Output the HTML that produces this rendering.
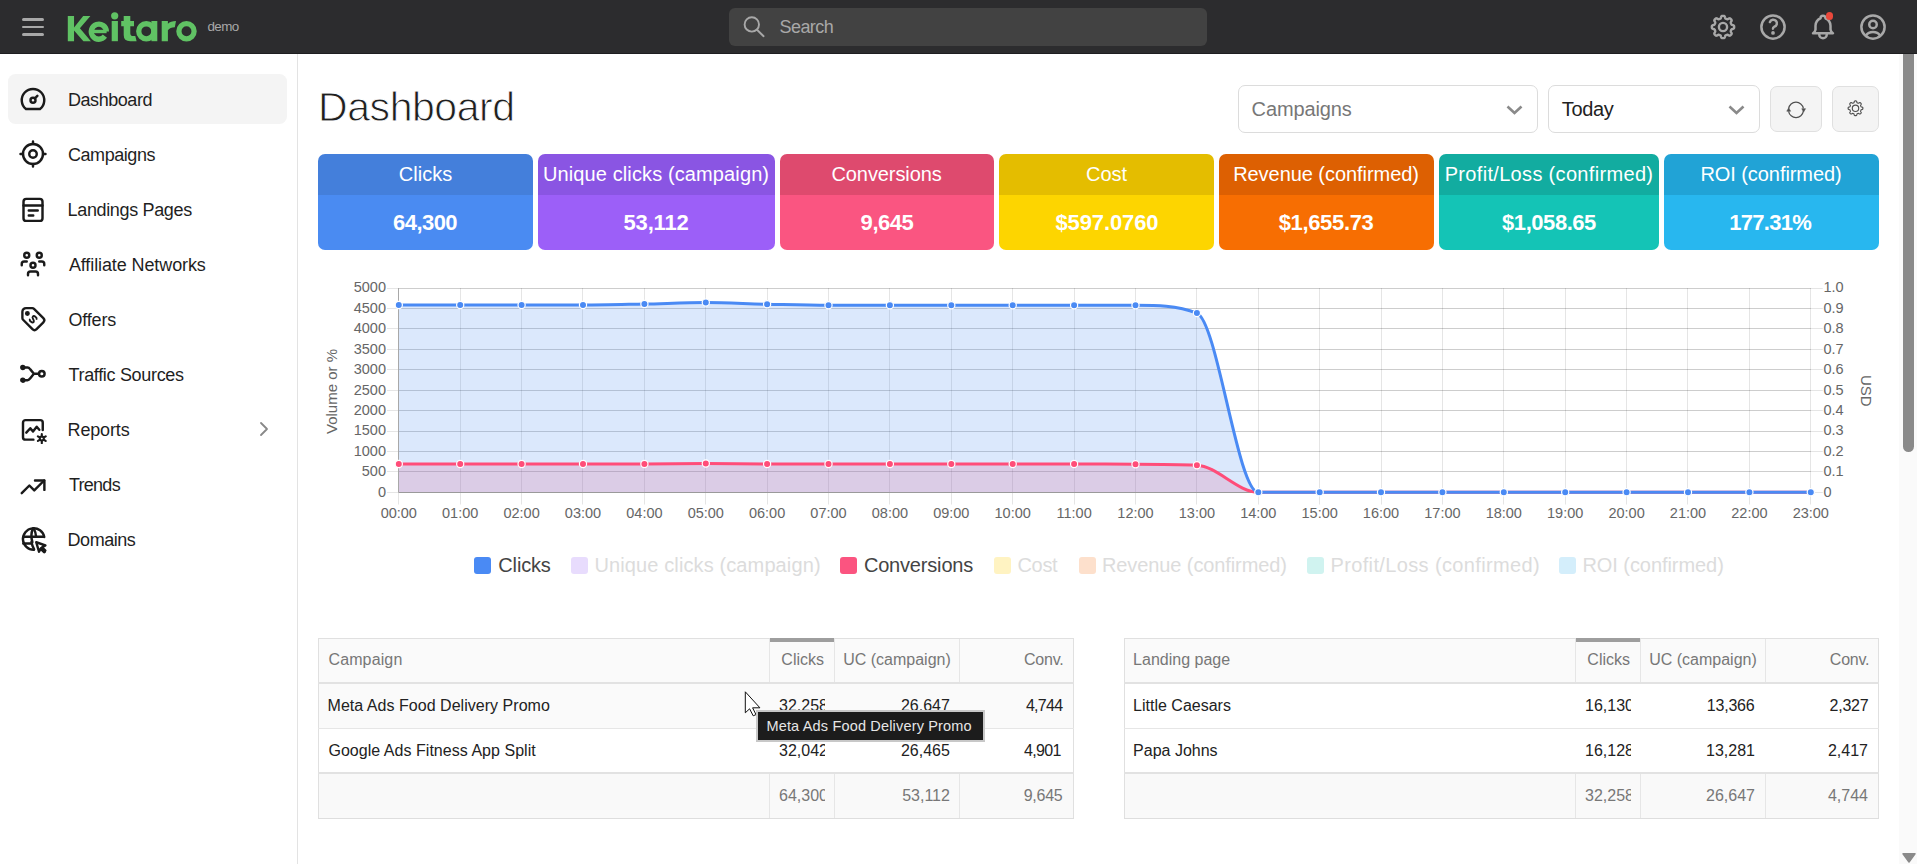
<!DOCTYPE html>
<html><head><meta charset="utf-8"><title>Keitaro Dashboard</title>
<style>
*{box-sizing:border-box;margin:0;padding:0}
html,body{width:1917px;height:864px;overflow:hidden;background:#fff;font-family:"Liberation Sans",sans-serif;color:#222}
#top{position:absolute;left:0;top:0;width:1917px;height:54px;background:#2c2c2e;border-bottom:1px solid #1e1e20;z-index:5}
.hb{position:absolute;left:22px;width:22px;height:2.6px;background:#a8a8a8;border-radius:2px}
#side{position:absolute;left:0;top:54px;width:298px;height:810px;border-right:1px solid #e3e3e3;background:#fff}
.mi{position:absolute;left:18px}
.mt{position:absolute;left:68px;font-size:18px;line-height:24px;color:#1f1f1f;white-space:nowrap}
.card{position:absolute;top:154px;height:96px;border-radius:7px;overflow:hidden;color:#fff;text-align:center}
.ct{height:41px;font-size:20px;line-height:41px;white-space:nowrap}
.ct span,.cv span{display:inline-block}
.cv{height:55px;font-size:22px;font-weight:bold;line-height:56px;white-space:nowrap}
.sel{position:absolute;top:85px;height:48px;border:1px solid #dcdcdc;border-radius:7px;background:#fff;font-size:20px;line-height:46px;padding-left:13px}
.sel span{display:inline-block}
.btn{position:absolute;top:86px;height:46px;border:1px solid #e0e0e0;border-radius:7px;background:#f4f4f4}
#chart text{font-family:"Liberation Sans",sans-serif;font-size:14.5px;fill:#666}
.lb{position:absolute;top:557px;width:17px;height:17px;border-radius:3px}
.lt{position:absolute;top:552px;font-size:20px;line-height:26px;white-space:nowrap}
.tbl{position:absolute;top:638px;height:181px;border:1px solid #e0e0e0;border-bottom:2px solid #dedede}
.tb{position:absolute}
.tx{position:absolute;font-size:16px;line-height:20px;white-space:nowrap}
.tx span{display:inline-block}
.clip{overflow:hidden}
</style></head><body>
<div id="top">
<div class="hb" style="top:18px"></div><div class="hb" style="top:25.5px"></div><div class="hb" style="top:33px"></div>
<svg style="position:absolute;left:0;top:0" width="205" height="54"><g fill="#60c264"><path d="M67.8 16H74.05V27.4L83.2 16H90.4L79.9 28.3L90.9 41.2H83.4L74.05 30.6V41.2H67.8Z"/><rect x="92" y="29.8" width="14.6" height="3.4"/><rect x="111.7" y="21" width="6.2" height="20.2"/><circle cx="114.7" cy="15.8" r="3.6"/><path d="M123.7 16H130.3V21.1H134V26.3H130.3V33.2Q130.3 36.1 133.5 36.1H135.3L136.6 41.2H130.3Q123.7 41.2 123.7 35V26.3H121.2V21.1H123.7Z"/><rect x="151.4" y="21" width="5.9" height="20.2"/><path d="M161.7 21H167.9V23.8Q170.6 21 176 21L174.8 27.3Q170 27.3 167.9 30.2V41.2H161.7Z"/></g><g fill="none" stroke="#60c264" stroke-width="5.3"><path d="M106.4 31.5A7.55 7.55 0 1 0 104.9 36.2"/><circle cx="146.3" cy="31.3" r="7.55"/><circle cx="186.5" cy="31.3" r="7.6"/></g></svg>
<div id="demo" style="position:absolute;left:207px;top:17.5px;font-size:13.4px;line-height:18px;color:#a8a8a8;letter-spacing:-0.600px;transform:translateX(0.45px);">demo</div>
<div style="position:absolute;left:729px;top:8px;width:478px;height:38px;background:#424242;border-radius:6px"></div>
<svg style="position:absolute;left:740px;top:13px" width="28" height="28" viewBox="0 0 28 28" fill="none" stroke="#a8a8a8" stroke-width="1.9" stroke-linecap="round"><circle cx="11.8" cy="11.4" r="7.2"/><path d="M17 16.7l6.6 6.5"/></svg>
<div id="search" style="position:absolute;left:779px;top:14px;font-size:18px;line-height:26px;color:#a8a8a8;letter-spacing:-0.540px;transform:translateX(0.45px);">Search</div>
<svg style="position:absolute;left:1708px;top:12px" width="30" height="30" viewBox="0 0 30 30" fill="none" stroke="#a8a8a8" stroke-width="2.4" stroke-linejoin="round"><path d="M15.00 3.83L15.29 3.84L15.58 3.86L15.87 3.90L16.16 3.99L16.43 4.14L16.67 4.44L16.86 4.94L17.01 5.54L17.15 6.04L17.32 6.36L17.51 6.54L17.71 6.66L17.92 6.76L18.13 6.85L18.34 6.93L18.55 7.02L18.76 7.11L18.98 7.19L19.21 7.24L19.47 7.25L19.81 7.15L20.27 6.89L20.80 6.57L21.28 6.35L21.67 6.31L21.97 6.39L22.23 6.54L22.46 6.71L22.69 6.90L22.90 7.10L23.10 7.31L23.29 7.54L23.46 7.77L23.61 8.03L23.69 8.33L23.65 8.72L23.43 9.20L23.11 9.73L22.85 10.19L22.75 10.53L22.76 10.79L22.81 11.02L22.89 11.24L22.98 11.45L23.07 11.66L23.15 11.87L23.24 12.08L23.34 12.29L23.46 12.49L23.64 12.68L23.96 12.85L24.46 12.99L25.06 13.14L25.56 13.33L25.86 13.57L26.01 13.84L26.10 14.13L26.14 14.42L26.16 14.71L26.17 15.00L26.16 15.29L26.14 15.58L26.10 15.87L26.01 16.16L25.86 16.43L25.56 16.67L25.06 16.86L24.46 17.01L23.96 17.15L23.64 17.32L23.46 17.51L23.34 17.71L23.24 17.92L23.15 18.13L23.07 18.34L22.98 18.55L22.89 18.76L22.81 18.98L22.76 19.21L22.75 19.47L22.85 19.81L23.11 20.27L23.43 20.80L23.65 21.28L23.69 21.67L23.61 21.97L23.46 22.23L23.29 22.46L23.10 22.69L22.90 22.90L22.69 23.10L22.46 23.29L22.23 23.46L21.97 23.61L21.67 23.69L21.28 23.65L20.80 23.43L20.27 23.11L19.81 22.85L19.47 22.75L19.21 22.76L18.98 22.81L18.76 22.89L18.55 22.98L18.34 23.07L18.13 23.15L17.92 23.24L17.71 23.34L17.51 23.46L17.32 23.64L17.15 23.96L17.01 24.46L16.86 25.06L16.67 25.56L16.43 25.86L16.16 26.01L15.87 26.10L15.58 26.14L15.29 26.16L15.00 26.17L14.71 26.16L14.42 26.14L14.13 26.10L13.84 26.01L13.57 25.86L13.33 25.56L13.14 25.06L12.99 24.46L12.85 23.96L12.68 23.64L12.49 23.46L12.29 23.34L12.08 23.24L11.87 23.15L11.66 23.07L11.45 22.98L11.24 22.89L11.02 22.81L10.79 22.76L10.53 22.75L10.19 22.85L9.73 23.11L9.20 23.43L8.72 23.65L8.33 23.69L8.03 23.61L7.77 23.46L7.54 23.29L7.31 23.10L7.10 22.90L6.90 22.69L6.71 22.46L6.54 22.23L6.39 21.97L6.31 21.67L6.35 21.28L6.57 20.80L6.89 20.27L7.15 19.81L7.25 19.47L7.24 19.21L7.19 18.98L7.11 18.76L7.02 18.55L6.93 18.34L6.85 18.13L6.76 17.92L6.66 17.71L6.54 17.51L6.36 17.32L6.04 17.15L5.54 17.01L4.94 16.86L4.44 16.67L4.14 16.43L3.99 16.16L3.90 15.87L3.86 15.58L3.84 15.29L3.83 15.00L3.84 14.71L3.86 14.42L3.90 14.13L3.99 13.84L4.14 13.57L4.44 13.33L4.94 13.14L5.54 12.99L6.04 12.85L6.36 12.68L6.54 12.49L6.66 12.29L6.76 12.08L6.85 11.87L6.93 11.66L7.02 11.45L7.11 11.24L7.19 11.02L7.24 10.79L7.25 10.53L7.15 10.19L6.89 9.73L6.57 9.20L6.35 8.72L6.31 8.33L6.39 8.03L6.54 7.77L6.71 7.54L6.90 7.31L7.10 7.10L7.31 6.90L7.54 6.71L7.77 6.54L8.03 6.39L8.33 6.31L8.72 6.35L9.20 6.57L9.73 6.89L10.19 7.15L10.53 7.25L10.79 7.24L11.02 7.19L11.24 7.11L11.45 7.02L11.66 6.93L11.87 6.85L12.08 6.76L12.29 6.66L12.49 6.54L12.68 6.36L12.85 6.04L12.99 5.54L13.14 4.94L13.33 4.44L13.57 4.14L13.84 3.99L14.13 3.90L14.42 3.86L14.71 3.84Z"/><circle cx="15" cy="15" r="4.1"/></svg>
<svg style="position:absolute;left:1758px;top:12px" width="30" height="30" viewBox="0 0 24 24" fill="none" stroke="#a8a8a8" stroke-width="2" stroke-linecap="round" stroke-linejoin="round"><circle cx="12" cy="12" r="9.3"/><path d="M12 16.7v.01" stroke-width="3"/><path d="M12 13.3a1.5 1.5 0 0 1 .9 -1.45a2.9 2.9 0 1 0 -3.4 -3.8"/></svg>
<svg style="position:absolute;left:1808px;top:12px" width="30" height="30" viewBox="0 0 24 24" fill="none" stroke="#a8a8a8" stroke-width="2" stroke-linecap="round" stroke-linejoin="round"><path d="M10 5a2 2 0 1 1 4 0a7 7 0 0 1 4 6v3a4 4 0 0 0 2 3h-16a4 4 0 0 0 2 -3v-3a7 7 0 0 1 4 -6"/><path d="M9 17v1a3 3 0 0 0 6 0v-1"/></svg>
<div style="position:absolute;left:1825.8px;top:12.3px;width:7.5px;height:7.5px;border-radius:50%;background:#e9483b"></div>
<svg style="position:absolute;left:1858px;top:12px" width="30" height="30" viewBox="0 0 24 24" fill="none" stroke="#a8a8a8" stroke-width="2" stroke-linecap="round" stroke-linejoin="round"><circle cx="12" cy="12" r="9.3"/><circle cx="12" cy="10" r="3"/><path d="M6.5 18.6c1-1.6 2.5-2.6 5.5-2.6s4.5 1 5.5 2.6"/></svg>
</div>
<div id="side">
<div style="position:absolute;left:8px;top:20px;width:279px;height:50px;border-radius:7.5px;background:#f4f4f4"></div>
</div>
<svg class="mi" style="top:84px" width="30" height="30" viewBox="0 0 24 24" fill="none" stroke="#1a1a1a" stroke-width="1.95" stroke-linecap="round" stroke-linejoin="round"><path d="M12 13m-2 0a2 2 0 1 0 4 0a2 2 0 1 0 -4 0"/><path d="M13.45 11.55l2.05 -2.05"/><path d="M6.4 20a9 9 0 1 1 11.2 0z"/></svg>
<div class="mt" id="m_dash" style="top:88px;letter-spacing:-0.450px;">Dashboard</div>
<svg class="mi" style="top:139px" width="30" height="30" viewBox="0 0 24 24" fill="none" stroke="#1a1a1a" stroke-width="1.95" stroke-linecap="round" stroke-linejoin="round"><path d="M12 12m-3 0a3 3 0 1 0 6 0a3 3 0 1 0 -6 0"/><path d="M12 12m-8 0a8 8 0 1 0 16 0a8 8 0 1 0 -16 0"/><path d="M12 2v2M12 20v2M20 12h2M2 12h2"/></svg>
<div class="mt" id="m_camp" style="top:143px;letter-spacing:-0.450px;">Campaigns</div>
<svg class="mi" style="top:194px" width="30" height="30" viewBox="0 0 24 24" fill="none" stroke="#1a1a1a" stroke-width="1.95" stroke-linecap="round" stroke-linejoin="round"><rect x="4.4" y="3.9" width="15.2" height="17.6" rx="2.2"/><path d="M4.4 9.2h15.2M8.6 13.2h7.2M8.6 17.2h3.6"/></svg>
<div class="mt" id="m_land" style="top:198px;letter-spacing:-0.346px;transform:translateX(-0.45px);">Landings Pages</div>
<svg class="mi" style="top:249px" width="30" height="30" viewBox="0 0 24 24" fill="none" stroke="#1a1a1a" stroke-width="1.95" stroke-linecap="round" stroke-linejoin="round"><path d="M10 13a2 2 0 1 0 4 0a2 2 0 0 0 -4 0"/><path d="M8 21v-1a2 2 0 0 1 2 -2h4a2 2 0 0 1 2 2v1"/><path d="M15 5a2 2 0 1 0 4 0a2 2 0 0 0 -4 0"/><path d="M17 10h2a2 2 0 0 1 2 2v1"/><path d="M5 5a2 2 0 1 0 4 0a2 2 0 0 0 -4 0"/><path d="M3 13v-1a2 2 0 0 1 2 -2h2"/></svg>
<div class="mt" id="m_aff" style="top:253px;letter-spacing:-0.106px;transform:translateX(0.90px);">Affiliate Networks</div>
<svg class="mi" style="top:304px" width="30" height="30" viewBox="0 0 24 24" fill="none" stroke="#1a1a1a" stroke-width="1.95" stroke-linecap="round" stroke-linejoin="round"><circle cx="7.5" cy="7.6" r="1" fill="#1a1a1a"/><path d="M3 6v5.172a2 2 0 0 0 .586 1.414l7.71 7.71a2.41 2.41 0 0 0 3.408 0l5.592 -5.592a2.41 2.41 0 0 0 0 -3.408l-7.71 -7.71a2 2 0 0 0 -1.414 -.586h-5.172a3 3 0 0 0 -3 3z" transform="translate(0.6 0.4) scale(0.97)"/><path d="M1.8 -2.2C1.3 -3.1 -1.9 -3.2 -1.9 -1.3C-1.9 0.4 1.9 -0.3 1.9 1.4C1.9 3.2 -1.3 3.2 -1.9 2.3" stroke-width="1.6" transform="translate(12.2 12.2) rotate(45) scale(0.95)"/></svg>
<div class="mt" id="m_offer" style="top:308px;letter-spacing:-0.180px;transform:translateX(0.45px);">Offers</div>
<svg class="mi" style="top:359px" width="30" height="30" viewBox="0 0 24 24" fill="none" stroke="#1a1a1a" stroke-width="1.95" stroke-linecap="round" stroke-linejoin="round"><circle cx="3.84" cy="6.8" r="1.2" fill="#1a1a1a"/><circle cx="3.84" cy="16.96" r="1.2" fill="#1a1a1a"/><path d="M3.84 6.8h3.8c1 0 1.5 .6 2.2 1.5l2.88 3.5l-2.88 3.66c-.7 .9 -1.2 1.5 -2.2 1.5h-3.8M12.72 11.8h4.1"/><circle cx="19.04" cy="11.8" r="2.24"/></svg>
<div class="mt" id="m_traf" style="top:363px;letter-spacing:-0.321px;transform:translateX(0.45px);">Traffic Sources</div>
<svg class="mi" style="top:414px" width="30" height="30" viewBox="0 0 24 24" fill="none" stroke="#1a1a1a" stroke-width="1.95" stroke-linecap="round" stroke-linejoin="round"><path d="M12.3 20.5h-6.3a2 2 0 0 1 -2 -2v-11.6a2 2 0 0 1 2 -2h11.8a2 2 0 0 1 2 2v5.9"/><path d="M6.64 14.88l3.2 -3.52l2.16 2.64l2.96 -3.76l2.08 2.4"/><circle cx="19.04" cy="19.68" r="1.6" stroke-width="1.6"/><path d="M19.04 16.1v1.9M19.04 21.4v1.9M15.94 17.9l1.6 .9M20.54 20.6l1.6 .9M15.94 21.5l1.6 -.9M20.54 18.8l1.6 -.9" stroke-width="1.7"/></svg>
<div class="mt" id="m_rep" style="top:418px;letter-spacing:-0.150px;transform:translateX(-0.45px);">Reports</div>
<svg class="mi" style="top:469px" width="30" height="30" viewBox="0 0 24 24" fill="none" stroke="#1a1a1a" stroke-width="1.95" stroke-linecap="round" stroke-linejoin="round"><path d="M3 19.3l6.1 -6.1l3.9 3.9l7.9 -7.9"/><path d="M13.6 9.2h7.5v7.5"/></svg>
<div class="mt" id="m_trend" style="top:473px;letter-spacing:-0.720px;transform:translateX(0.90px);">Trends</div>
<svg class="mi" style="top:524px" width="30" height="30" viewBox="0 0 24 24" fill="none" stroke="#1a1a1a" stroke-width="1.95" stroke-linecap="round" stroke-linejoin="round"><path d="M12.6 20.6a8.6 8.6 0 1 1 8.4 -10.2"/><path d="M4.2 10.2h16.2M4.2 15.6h6.5"/><path d="M11.9 3.6a16 16 0 0 0 -.4 10.8"/><path d="M12.6 3.6a16 16 0 0 1 1.8 6.2"/><path d="M12.9 20.3a16 16 0 0 1 -2.1 -6.2"/><path d="M14.6 14.6l2.2 7.6l1.5 -2.6l2.6 2.6l1 -1l-2.6 -2.6l2.6 -1.5z" fill="none"/><path d="M18.7 19.8l2.3 2.3" stroke-width="2.8"/></svg>
<div class="mt" id="m_dom" style="top:528px;letter-spacing:-0.450px;transform:translateX(-0.45px);">Domains</div>
<svg style="position:absolute;left:257px;top:421px" width="14" height="16" viewBox="0 0 14 16"><path d="M4 2l6 6l-6 6" fill="none" stroke="#888" stroke-width="1.8" stroke-linecap="round" stroke-linejoin="round"/></svg>
<div id="title" style="position:absolute;left:319px;top:82px;font-size:41px;line-height:50px;color:#1f1f1f;-webkit-text-stroke:0.9px #fff;letter-spacing:-0.450px;transform:translateX(-0.90px);">Dashboard</div>
<div class="sel" style="left:1238px;width:300px;color:#777"><span id="selc" style="letter-spacing:-0.113px;transform:translateX(-0.45px);">Campaigns</span></div>
<div class="sel" style="left:1548px;width:212px;color:#222"><span id="selt" style="letter-spacing:-0.337px;transform:translateX(-0.23px);">Today</span></div>
<svg style="position:absolute;left:1505px;top:103px" width="19" height="14"><path d="M2.5 3.5l7 6.5l7 -6.5" fill="none" stroke="#8a8a8a" stroke-width="2.6"/></svg>
<svg style="position:absolute;left:1727px;top:103px" width="19" height="14"><path d="M2.5 3.5l7 6.5l7 -6.5" fill="none" stroke="#8a8a8a" stroke-width="2.6"/></svg>
<div class="btn" style="left:1770px;width:52px"></div>
<div class="btn" style="left:1832px;width:47px"></div>
<svg style="position:absolute;left:1770px;top:86px" width="52" height="46" fill="none" stroke="#505050" stroke-width="1.2"><path d="M18.6 22.6A7.5 7.5 0 0 1 33.4 22.4"/><path d="M33.4 25.2A7.5 7.5 0 0 1 18.6 25.3"/><path d="M16.8 25.2H20.6L18.7 21.9Z M31.8 22.7H35.5L33.6 26.1Z" fill="#505050" stroke-width="0.6" stroke-linejoin="round"/></svg>
<svg style="position:absolute;left:1832px;top:86px" width="47" height="46" fill="none" stroke="#505050" stroke-width="1.15" stroke-linejoin="round"><path d="M23.50 14.92L23.69 14.93L23.89 14.94L24.08 14.97L24.26 15.03L24.44 15.13L24.60 15.33L24.73 15.67L24.82 16.08L24.91 16.42L25.02 16.63L25.14 16.75L25.28 16.83L25.41 16.90L25.55 16.96L25.69 17.01L25.83 17.07L25.97 17.13L26.11 17.18L26.26 17.22L26.43 17.22L26.66 17.14L26.96 16.97L27.32 16.74L27.65 16.59L27.90 16.56L28.10 16.62L28.28 16.71L28.43 16.82L28.58 16.95L28.72 17.08L28.85 17.22L28.98 17.37L29.09 17.52L29.18 17.70L29.24 17.90L29.21 18.15L29.06 18.48L28.83 18.84L28.66 19.14L28.58 19.37L28.58 19.54L28.62 19.69L28.67 19.83L28.73 19.97L28.79 20.11L28.84 20.25L28.90 20.39L28.97 20.52L29.05 20.66L29.17 20.78L29.38 20.89L29.72 20.98L30.13 21.07L30.47 21.20L30.67 21.36L30.77 21.54L30.83 21.72L30.86 21.91L30.87 22.11L30.88 22.30L30.87 22.49L30.86 22.69L30.83 22.88L30.77 23.06L30.67 23.24L30.47 23.40L30.13 23.53L29.72 23.62L29.38 23.71L29.17 23.82L29.05 23.94L28.97 24.08L28.90 24.21L28.84 24.35L28.79 24.49L28.73 24.63L28.67 24.77L28.62 24.91L28.58 25.06L28.58 25.23L28.66 25.46L28.83 25.76L29.06 26.12L29.21 26.45L29.24 26.70L29.18 26.90L29.09 27.08L28.98 27.23L28.85 27.38L28.72 27.52L28.58 27.65L28.43 27.78L28.28 27.89L28.10 27.98L27.90 28.04L27.65 28.01L27.32 27.86L26.96 27.63L26.66 27.46L26.43 27.38L26.26 27.38L26.11 27.42L25.97 27.47L25.83 27.53L25.69 27.59L25.55 27.64L25.41 27.70L25.28 27.77L25.14 27.85L25.02 27.97L24.91 28.18L24.82 28.52L24.73 28.93L24.60 29.27L24.44 29.47L24.26 29.57L24.08 29.63L23.89 29.66L23.69 29.67L23.50 29.68L23.31 29.67L23.11 29.66L22.92 29.63L22.74 29.57L22.56 29.47L22.40 29.27L22.27 28.93L22.18 28.52L22.09 28.18L21.98 27.97L21.86 27.85L21.72 27.77L21.59 27.70L21.45 27.64L21.31 27.59L21.17 27.53L21.03 27.47L20.89 27.42L20.74 27.38L20.57 27.38L20.34 27.46L20.04 27.63L19.68 27.86L19.35 28.01L19.10 28.04L18.90 27.98L18.72 27.89L18.57 27.78L18.42 27.65L18.28 27.52L18.15 27.38L18.02 27.23L17.91 27.08L17.82 26.90L17.76 26.70L17.79 26.45L17.94 26.12L18.17 25.76L18.34 25.46L18.42 25.23L18.42 25.06L18.38 24.91L18.33 24.77L18.27 24.63L18.21 24.49L18.16 24.35L18.10 24.21L18.03 24.08L17.95 23.94L17.83 23.82L17.62 23.71L17.28 23.62L16.87 23.53L16.53 23.40L16.33 23.24L16.23 23.06L16.17 22.88L16.14 22.69L16.13 22.49L16.12 22.30L16.13 22.11L16.14 21.91L16.17 21.72L16.23 21.54L16.33 21.36L16.53 21.20L16.87 21.07L17.28 20.98L17.62 20.89L17.83 20.78L17.95 20.66L18.03 20.52L18.10 20.39L18.16 20.25L18.21 20.11L18.27 19.97L18.33 19.83L18.38 19.69L18.42 19.54L18.42 19.37L18.34 19.14L18.17 18.84L17.94 18.48L17.79 18.15L17.76 17.90L17.82 17.70L17.91 17.52L18.02 17.37L18.15 17.22L18.28 17.08L18.42 16.95L18.57 16.82L18.72 16.71L18.90 16.62L19.10 16.56L19.35 16.59L19.68 16.74L20.04 16.97L20.34 17.14L20.57 17.22L20.74 17.22L20.89 17.18L21.03 17.13L21.17 17.07L21.31 17.01L21.45 16.96L21.59 16.90L21.72 16.83L21.86 16.75L21.98 16.63L22.09 16.42L22.18 16.08L22.27 15.67L22.40 15.33L22.56 15.13L22.74 15.03L22.92 14.97L23.11 14.94L23.31 14.93Z"/><circle cx="23.5" cy="22.3" r="3.2"/></svg>
<div class="card" style="left:318px;width:215px"><div class="ct" style="background:#447fdb"><span id="ct0" style="">Clicks</span></div><div class="cv" style="background:#4a8bf2"><span id="cv0" style="letter-spacing:-0.540px;transform:translateX(-0.45px);">64,300</span></div></div>
<div class="card" style="left:538px;width:237px"><div class="ct" style="background:#8a55e3"><span id="ct1" style="letter-spacing:0.117px;transform:translateX(-0.45px);">Unique clicks (campaign)</span></div><div class="cv" style="background:#9c5ff8"><span id="cv1" style="letter-spacing:-0.180px;transform:translateX(-0.45px);">53,112</span></div></div>
<div class="card" style="left:780px;width:214px"><div class="ct" style="background:#de4a6e"><span id="ct2" style="letter-spacing:-0.090px;transform:translateX(-0.45px);">Conversions</span></div><div class="cv" style="background:#fa5581"><span id="cv2" style="letter-spacing:-0.450px;">9,645</span></div></div>
<div class="card" style="left:999px;width:215px"><div class="ct" style="background:#e4bd00"><span id="ct3" style="">Cost</span></div><div class="cv" style="background:#fdd500"><span id="cv3" style="letter-spacing:-0.113px;transform:translateX(0.45px);">$597.0760</span></div></div>
<div class="card" style="left:1219px;width:215px"><div class="ct" style="background:#dd6002"><span id="ct4" style="letter-spacing:-0.050px;transform:translateX(-0.45px);">Revenue (confirmed)</span></div><div class="cv" style="background:#f76e02"><span id="cv4" style="letter-spacing:-0.338px;transform:translateX(-0.45px);">$1,655.73</span></div></div>
<div class="card" style="left:1439px;width:220px"><div class="ct" style="background:#12aca0"><span id="ct5" style="letter-spacing:0.327px;">Profit/Loss (confirmed)</span></div><div class="cv" style="background:#14c4b6"><span id="cv5" style="letter-spacing:-0.450px;">$1,058.65</span></div></div>
<div class="card" style="left:1664px;width:215px"><div class="ct" style="background:#21a3d6"><span id="ct6" style="letter-spacing:-0.064px;transform:translateX(-0.45px);">ROI (confirmed)</span></div><div class="cv" style="background:#28b7ef"><span id="cv6" style="letter-spacing:-0.750px;transform:translateX(-1.35px);">177.31%</span></div></div>
<svg id="chart" style="position:absolute;left:0;top:0" width="1917" height="540">
<line x1="387" y1="492.50" x2="1810.8" y2="492.50" stroke="rgba(0,0,0,0.1)"/>
<line x1="398.8" y1="492.50" x2="1822.8" y2="492.50" stroke="rgba(0,0,0,0.1)"/>
<line x1="387" y1="471.50" x2="1810.8" y2="471.50" stroke="rgba(0,0,0,0.1)"/>
<line x1="398.8" y1="471.50" x2="1822.8" y2="471.50" stroke="rgba(0,0,0,0.1)"/>
<line x1="387" y1="451.50" x2="1810.8" y2="451.50" stroke="rgba(0,0,0,0.1)"/>
<line x1="398.8" y1="451.50" x2="1822.8" y2="451.50" stroke="rgba(0,0,0,0.1)"/>
<line x1="387" y1="431.50" x2="1810.8" y2="431.50" stroke="rgba(0,0,0,0.1)"/>
<line x1="398.8" y1="431.50" x2="1822.8" y2="431.50" stroke="rgba(0,0,0,0.1)"/>
<line x1="387" y1="410.50" x2="1810.8" y2="410.50" stroke="rgba(0,0,0,0.1)"/>
<line x1="398.8" y1="410.50" x2="1822.8" y2="410.50" stroke="rgba(0,0,0,0.1)"/>
<line x1="387" y1="390.50" x2="1810.8" y2="390.50" stroke="rgba(0,0,0,0.1)"/>
<line x1="398.8" y1="390.50" x2="1822.8" y2="390.50" stroke="rgba(0,0,0,0.1)"/>
<line x1="387" y1="369.50" x2="1810.8" y2="369.50" stroke="rgba(0,0,0,0.1)"/>
<line x1="398.8" y1="369.50" x2="1822.8" y2="369.50" stroke="rgba(0,0,0,0.1)"/>
<line x1="387" y1="349.50" x2="1810.8" y2="349.50" stroke="rgba(0,0,0,0.1)"/>
<line x1="398.8" y1="349.50" x2="1822.8" y2="349.50" stroke="rgba(0,0,0,0.1)"/>
<line x1="387" y1="328.50" x2="1810.8" y2="328.50" stroke="rgba(0,0,0,0.1)"/>
<line x1="398.8" y1="328.50" x2="1822.8" y2="328.50" stroke="rgba(0,0,0,0.1)"/>
<line x1="387" y1="308.50" x2="1810.8" y2="308.50" stroke="rgba(0,0,0,0.1)"/>
<line x1="398.8" y1="308.50" x2="1822.8" y2="308.50" stroke="rgba(0,0,0,0.1)"/>
<line x1="387" y1="288.50" x2="1810.8" y2="288.50" stroke="rgba(0,0,0,0.1)"/>
<line x1="398.8" y1="288.50" x2="1822.8" y2="288.50" stroke="rgba(0,0,0,0.1)"/>
<line x1="398.50" y1="288" x2="398.50" y2="504.5" stroke="rgba(0,0,0,0.1)"/>
<line x1="460.50" y1="288" x2="460.50" y2="504.5" stroke="rgba(0,0,0,0.1)"/>
<line x1="521.50" y1="288" x2="521.50" y2="504.5" stroke="rgba(0,0,0,0.1)"/>
<line x1="582.50" y1="288" x2="582.50" y2="504.5" stroke="rgba(0,0,0,0.1)"/>
<line x1="644.50" y1="288" x2="644.50" y2="504.5" stroke="rgba(0,0,0,0.1)"/>
<line x1="705.50" y1="288" x2="705.50" y2="504.5" stroke="rgba(0,0,0,0.1)"/>
<line x1="767.50" y1="288" x2="767.50" y2="504.5" stroke="rgba(0,0,0,0.1)"/>
<line x1="828.50" y1="288" x2="828.50" y2="504.5" stroke="rgba(0,0,0,0.1)"/>
<line x1="889.50" y1="288" x2="889.50" y2="504.5" stroke="rgba(0,0,0,0.1)"/>
<line x1="951.50" y1="288" x2="951.50" y2="504.5" stroke="rgba(0,0,0,0.1)"/>
<line x1="1012.50" y1="288" x2="1012.50" y2="504.5" stroke="rgba(0,0,0,0.1)"/>
<line x1="1074.50" y1="288" x2="1074.50" y2="504.5" stroke="rgba(0,0,0,0.1)"/>
<line x1="1135.50" y1="288" x2="1135.50" y2="504.5" stroke="rgba(0,0,0,0.1)"/>
<line x1="1196.50" y1="288" x2="1196.50" y2="504.5" stroke="rgba(0,0,0,0.1)"/>
<line x1="1258.50" y1="288" x2="1258.50" y2="504.5" stroke="rgba(0,0,0,0.1)"/>
<line x1="1319.50" y1="288" x2="1319.50" y2="504.5" stroke="rgba(0,0,0,0.1)"/>
<line x1="1381.50" y1="288" x2="1381.50" y2="504.5" stroke="rgba(0,0,0,0.1)"/>
<line x1="1442.50" y1="288" x2="1442.50" y2="504.5" stroke="rgba(0,0,0,0.1)"/>
<line x1="1503.50" y1="288" x2="1503.50" y2="504.5" stroke="rgba(0,0,0,0.1)"/>
<line x1="1565.50" y1="288" x2="1565.50" y2="504.5" stroke="rgba(0,0,0,0.1)"/>
<line x1="1626.50" y1="288" x2="1626.50" y2="504.5" stroke="rgba(0,0,0,0.1)"/>
<line x1="1687.50" y1="288" x2="1687.50" y2="504.5" stroke="rgba(0,0,0,0.1)"/>
<line x1="1749.50" y1="288" x2="1749.50" y2="504.5" stroke="rgba(0,0,0,0.1)"/>
<line x1="1810.50" y1="288" x2="1810.50" y2="504.5" stroke="rgba(0,0,0,0.1)"/>
<path d="M398.8 464.0C419.3 464.0 439.7 464.0 460.2 464.0C480.7 464.0 501.1 464.0 521.6 464.0C542.0 464.0 562.5 464.0 583.0 464.0C603.4 464.0 623.9 464.0 644.4 464.0C664.8 464.0 685.3 463.5 705.8 463.5C726.2 463.5 746.7 464.0 767.1 464.0C787.6 464.0 808.1 464.0 828.5 464.0C849.0 464.0 869.5 464.0 889.9 464.0C910.4 464.0 930.8 464.0 951.3 464.0C971.8 464.0 992.2 464.0 1012.7 464.0C1033.2 464.0 1053.6 464.0 1074.1 464.0C1094.6 464.0 1115.0 464.2 1135.5 464.2C1155.9 464.2 1176.4 464.2 1196.9 465.2C1217.3 466.2 1237.8 492.3 1258.3 492.3C1278.7 492.3 1299.2 492.3 1319.7 492.3C1340.1 492.3 1360.6 492.3 1381.0 492.3C1401.5 492.3 1422.0 492.3 1442.4 492.3C1462.9 492.3 1483.4 492.3 1503.8 492.3C1524.3 492.3 1544.7 492.3 1565.2 492.3C1585.7 492.3 1606.1 492.3 1626.6 492.3C1647.1 492.3 1667.5 492.3 1688.0 492.3C1708.5 492.3 1728.9 492.3 1749.4 492.3C1769.8 492.3 1790.3 492.3 1810.8 492.3L1810.8 492.3L398.8 492.3Z" fill="rgba(255,80,120,0.2)"/>
<path d="M398.8 305.0C419.3 305.0 439.7 305.0 460.2 305.0C480.7 305.0 501.1 305.0 521.6 305.0C542.0 305.0 562.5 305.0 583.0 305.0C603.4 305.0 623.9 304.4 644.4 304.0C664.8 303.6 685.3 302.6 705.8 302.6C726.2 302.6 746.7 303.8 767.1 304.2C787.6 304.6 808.1 305.2 828.5 305.2C849.0 305.2 869.5 305.2 889.9 305.2C910.4 305.2 930.8 305.2 951.3 305.2C971.8 305.2 992.2 305.2 1012.7 305.2C1033.2 305.2 1053.6 305.2 1074.1 305.2C1094.6 305.2 1115.0 305.3 1135.5 305.3C1155.9 305.3 1176.4 305.3 1196.9 313.1C1217.3 320.9 1237.8 492.3 1258.3 492.3C1278.7 492.3 1299.2 492.3 1319.7 492.3C1340.1 492.3 1360.6 492.3 1381.0 492.3C1401.5 492.3 1422.0 492.3 1442.4 492.3C1462.9 492.3 1483.4 492.3 1503.8 492.3C1524.3 492.3 1544.7 492.3 1565.2 492.3C1585.7 492.3 1606.1 492.3 1626.6 492.3C1647.1 492.3 1667.5 492.3 1688.0 492.3C1708.5 492.3 1728.9 492.3 1749.4 492.3C1769.8 492.3 1790.3 492.3 1810.8 492.3L1810.8 492.3L398.8 492.3Z" fill="rgba(74,140,240,0.2)"/>
<line x1="398.5" y1="288" x2="398.5" y2="492.3" stroke="#a8a8a8"/>
<line x1="398.8" y1="492.5" x2="1810.8" y2="492.5" stroke="#9a9a9a"/>
<path d="M398.8 464.0C419.3 464.0 439.7 464.0 460.2 464.0C480.7 464.0 501.1 464.0 521.6 464.0C542.0 464.0 562.5 464.0 583.0 464.0C603.4 464.0 623.9 464.0 644.4 464.0C664.8 464.0 685.3 463.5 705.8 463.5C726.2 463.5 746.7 464.0 767.1 464.0C787.6 464.0 808.1 464.0 828.5 464.0C849.0 464.0 869.5 464.0 889.9 464.0C910.4 464.0 930.8 464.0 951.3 464.0C971.8 464.0 992.2 464.0 1012.7 464.0C1033.2 464.0 1053.6 464.0 1074.1 464.0C1094.6 464.0 1115.0 464.2 1135.5 464.2C1155.9 464.2 1176.4 464.2 1196.9 465.2C1217.3 466.2 1237.8 492.3 1258.3 492.3C1278.7 492.3 1299.2 492.3 1319.7 492.3C1340.1 492.3 1360.6 492.3 1381.0 492.3C1401.5 492.3 1422.0 492.3 1442.4 492.3C1462.9 492.3 1483.4 492.3 1503.8 492.3C1524.3 492.3 1544.7 492.3 1565.2 492.3C1585.7 492.3 1606.1 492.3 1626.6 492.3C1647.1 492.3 1667.5 492.3 1688.0 492.3C1708.5 492.3 1728.9 492.3 1749.4 492.3C1769.8 492.3 1790.3 492.3 1810.8 492.3" fill="none" stroke="#ff4d79" stroke-width="3"/>
<path d="M398.8 305.0C419.3 305.0 439.7 305.0 460.2 305.0C480.7 305.0 501.1 305.0 521.6 305.0C542.0 305.0 562.5 305.0 583.0 305.0C603.4 305.0 623.9 304.4 644.4 304.0C664.8 303.6 685.3 302.6 705.8 302.6C726.2 302.6 746.7 303.8 767.1 304.2C787.6 304.6 808.1 305.2 828.5 305.2C849.0 305.2 869.5 305.2 889.9 305.2C910.4 305.2 930.8 305.2 951.3 305.2C971.8 305.2 992.2 305.2 1012.7 305.2C1033.2 305.2 1053.6 305.2 1074.1 305.2C1094.6 305.2 1115.0 305.3 1135.5 305.3C1155.9 305.3 1176.4 305.3 1196.9 313.1C1217.3 320.9 1237.8 492.3 1258.3 492.3C1278.7 492.3 1299.2 492.3 1319.7 492.3C1340.1 492.3 1360.6 492.3 1381.0 492.3C1401.5 492.3 1422.0 492.3 1442.4 492.3C1462.9 492.3 1483.4 492.3 1503.8 492.3C1524.3 492.3 1544.7 492.3 1565.2 492.3C1585.7 492.3 1606.1 492.3 1626.6 492.3C1647.1 492.3 1667.5 492.3 1688.0 492.3C1708.5 492.3 1728.9 492.3 1749.4 492.3C1769.8 492.3 1790.3 492.3 1810.8 492.3" fill="none" stroke="#4a8af4" stroke-width="3"/>
<circle cx="398.8" cy="464" r="3.6" fill="#ff4d79" stroke="#fff" stroke-width="1.2"/>
<circle cx="460.2" cy="464" r="3.6" fill="#ff4d79" stroke="#fff" stroke-width="1.2"/>
<circle cx="521.6" cy="464" r="3.6" fill="#ff4d79" stroke="#fff" stroke-width="1.2"/>
<circle cx="583.0" cy="464" r="3.6" fill="#ff4d79" stroke="#fff" stroke-width="1.2"/>
<circle cx="644.4" cy="464" r="3.6" fill="#ff4d79" stroke="#fff" stroke-width="1.2"/>
<circle cx="705.8" cy="463.5" r="3.6" fill="#ff4d79" stroke="#fff" stroke-width="1.2"/>
<circle cx="767.1" cy="464" r="3.6" fill="#ff4d79" stroke="#fff" stroke-width="1.2"/>
<circle cx="828.5" cy="464" r="3.6" fill="#ff4d79" stroke="#fff" stroke-width="1.2"/>
<circle cx="889.9" cy="464" r="3.6" fill="#ff4d79" stroke="#fff" stroke-width="1.2"/>
<circle cx="951.3" cy="464" r="3.6" fill="#ff4d79" stroke="#fff" stroke-width="1.2"/>
<circle cx="1012.7" cy="464" r="3.6" fill="#ff4d79" stroke="#fff" stroke-width="1.2"/>
<circle cx="1074.1" cy="464" r="3.6" fill="#ff4d79" stroke="#fff" stroke-width="1.2"/>
<circle cx="1135.5" cy="464.2" r="3.6" fill="#ff4d79" stroke="#fff" stroke-width="1.2"/>
<circle cx="1196.9" cy="465.2" r="3.6" fill="#ff4d79" stroke="#fff" stroke-width="1.2"/>
<circle cx="398.8" cy="305" r="3.6" fill="#4a8af4" stroke="#fff" stroke-width="1.2"/>
<circle cx="460.2" cy="305" r="3.6" fill="#4a8af4" stroke="#fff" stroke-width="1.2"/>
<circle cx="521.6" cy="305" r="3.6" fill="#4a8af4" stroke="#fff" stroke-width="1.2"/>
<circle cx="583.0" cy="305" r="3.6" fill="#4a8af4" stroke="#fff" stroke-width="1.2"/>
<circle cx="644.4" cy="304" r="3.6" fill="#4a8af4" stroke="#fff" stroke-width="1.2"/>
<circle cx="705.8" cy="302.6" r="3.6" fill="#4a8af4" stroke="#fff" stroke-width="1.2"/>
<circle cx="767.1" cy="304.2" r="3.6" fill="#4a8af4" stroke="#fff" stroke-width="1.2"/>
<circle cx="828.5" cy="305.2" r="3.6" fill="#4a8af4" stroke="#fff" stroke-width="1.2"/>
<circle cx="889.9" cy="305.2" r="3.6" fill="#4a8af4" stroke="#fff" stroke-width="1.2"/>
<circle cx="951.3" cy="305.2" r="3.6" fill="#4a8af4" stroke="#fff" stroke-width="1.2"/>
<circle cx="1012.7" cy="305.2" r="3.6" fill="#4a8af4" stroke="#fff" stroke-width="1.2"/>
<circle cx="1074.1" cy="305.2" r="3.6" fill="#4a8af4" stroke="#fff" stroke-width="1.2"/>
<circle cx="1135.5" cy="305.3" r="3.6" fill="#4a8af4" stroke="#fff" stroke-width="1.2"/>
<circle cx="1196.9" cy="313.1" r="3.6" fill="#4a8af4" stroke="#fff" stroke-width="1.2"/>
<circle cx="1258.3" cy="492.3" r="3.6" fill="#4a8af4" stroke="#fff" stroke-width="1.2"/>
<circle cx="1319.7" cy="492.3" r="3.6" fill="#4a8af4" stroke="#fff" stroke-width="1.2"/>
<circle cx="1381.0" cy="492.3" r="3.6" fill="#4a8af4" stroke="#fff" stroke-width="1.2"/>
<circle cx="1442.4" cy="492.3" r="3.6" fill="#4a8af4" stroke="#fff" stroke-width="1.2"/>
<circle cx="1503.8" cy="492.3" r="3.6" fill="#4a8af4" stroke="#fff" stroke-width="1.2"/>
<circle cx="1565.2" cy="492.3" r="3.6" fill="#4a8af4" stroke="#fff" stroke-width="1.2"/>
<circle cx="1626.6" cy="492.3" r="3.6" fill="#4a8af4" stroke="#fff" stroke-width="1.2"/>
<circle cx="1688.0" cy="492.3" r="3.6" fill="#4a8af4" stroke="#fff" stroke-width="1.2"/>
<circle cx="1749.4" cy="492.3" r="3.6" fill="#4a8af4" stroke="#fff" stroke-width="1.2"/>
<circle cx="1810.8" cy="492.3" r="3.6" fill="#4a8af4" stroke="#fff" stroke-width="1.2"/>
<text x="386" y="496.6" text-anchor="end">0</text>
<text x="1823.5" y="496.6">0</text>
<text x="386" y="476.2" text-anchor="end">500</text>
<text x="1823.5" y="476.2">0.1</text>
<text x="386" y="455.8" text-anchor="end">1000</text>
<text x="1823.5" y="455.8">0.2</text>
<text x="386" y="435.3" text-anchor="end">1500</text>
<text x="1823.5" y="435.3">0.3</text>
<text x="386" y="414.9" text-anchor="end">2000</text>
<text x="1823.5" y="414.9">0.4</text>
<text x="386" y="394.5" text-anchor="end">2500</text>
<text x="1823.5" y="394.5">0.5</text>
<text x="386" y="374.1" text-anchor="end">3000</text>
<text x="1823.5" y="374.1">0.6</text>
<text x="386" y="353.7" text-anchor="end">3500</text>
<text x="1823.5" y="353.7">0.7</text>
<text x="386" y="333.2" text-anchor="end">4000</text>
<text x="1823.5" y="333.2">0.8</text>
<text x="386" y="312.8" text-anchor="end">4500</text>
<text x="1823.5" y="312.8">0.9</text>
<text x="386" y="292.4" text-anchor="end">5000</text>
<text x="1823.5" y="292.4">1.0</text>
<text x="398.8" y="518" text-anchor="middle">00:00</text>
<text x="460.2" y="518" text-anchor="middle">01:00</text>
<text x="521.6" y="518" text-anchor="middle">02:00</text>
<text x="583.0" y="518" text-anchor="middle">03:00</text>
<text x="644.4" y="518" text-anchor="middle">04:00</text>
<text x="705.8" y="518" text-anchor="middle">05:00</text>
<text x="767.1" y="518" text-anchor="middle">06:00</text>
<text x="828.5" y="518" text-anchor="middle">07:00</text>
<text x="889.9" y="518" text-anchor="middle">08:00</text>
<text x="951.3" y="518" text-anchor="middle">09:00</text>
<text x="1012.7" y="518" text-anchor="middle">10:00</text>
<text x="1074.1" y="518" text-anchor="middle">11:00</text>
<text x="1135.5" y="518" text-anchor="middle">12:00</text>
<text x="1196.9" y="518" text-anchor="middle">13:00</text>
<text x="1258.3" y="518" text-anchor="middle">14:00</text>
<text x="1319.7" y="518" text-anchor="middle">15:00</text>
<text x="1381.0" y="518" text-anchor="middle">16:00</text>
<text x="1442.4" y="518" text-anchor="middle">17:00</text>
<text x="1503.8" y="518" text-anchor="middle">18:00</text>
<text x="1565.2" y="518" text-anchor="middle">19:00</text>
<text x="1626.6" y="518" text-anchor="middle">20:00</text>
<text x="1688.0" y="518" text-anchor="middle">21:00</text>
<text x="1749.4" y="518" text-anchor="middle">22:00</text>
<text x="1810.8" y="518" text-anchor="middle">23:00</text>
<text transform="translate(336.5 391.5) rotate(-90)" text-anchor="middle" style="font-size:15px">Volume or %</text>
<text transform="translate(1860.5 390.8) rotate(90)" text-anchor="middle" style="font-size:15px">USD</text>
</svg>
<div class="lb" style="left:474px;background:#4a8af4"></div><div class="lt" id="lg0" style="left:497px;color:#444;letter-spacing:-0.180px;transform:translateX(1.35px);">Clicks</div>
<div class="lb" style="left:571px;background:#e8dcfd"></div><div class="lt" id="lg1" style="left:594px;color:#dcdcdc;letter-spacing:0.117px;transform:translateX(0.45px);">Unique clicks (campaign)</div>
<div class="lb" style="left:840px;background:#fb5480"></div><div class="lt" id="lg2" style="left:863px;color:#444;letter-spacing:-0.180px;transform:translateX(0.90px);">Conversions</div>
<div class="lb" style="left:994px;background:#fff3c2"></div><div class="lt" id="lg3" style="left:1017px;color:#dcdcdc;letter-spacing:-0.300px;transform:translateX(0.45px);">Cost</div>
<div class="lb" style="left:1079px;background:#fde0cc"></div><div class="lt" id="lg4" style="left:1102px;color:#dcdcdc;letter-spacing:-0.100px;">Revenue (confirmed)</div>
<div class="lb" style="left:1307px;background:#d0f3f0"></div><div class="lt" id="lg5" style="left:1330px;color:#dcdcdc;letter-spacing:0.368px;transform:translateX(0.45px);">Profit/Loss (confirmed)</div>
<div class="lb" style="left:1559px;background:#d4eefb"></div><div class="lt" id="lg6" style="left:1582px;color:#dcdcdc;letter-spacing:-0.064px;transform:translateX(0.45px);">ROI (confirmed)</div>
<div class="tbl" style="left:318px;width:756px"></div>
<div class="tb" style="left:319px;top:639px;width:754px;height:43px;background:#fafafa"></div>
<div class="tb" style="left:319px;top:684px;width:754px;height:44px;background:#fafafa"></div>
<div class="tb" style="left:319px;top:729px;width:754px;height:43px;background:#fff"></div>
<div class="tb" style="left:319px;top:774px;width:754px;height:44px;background:#f9f9f9"></div>
<div class="tb" style="left:318px;top:682px;width:756px;height:2px;background:#e2e2e2"></div>
<div class="tb" style="left:318px;top:728px;width:756px;height:1px;background:#e6e6e6"></div>
<div class="tb" style="left:318px;top:772px;width:756px;height:2px;background:#e2e2e2"></div>
<div class="tb" style="left:769px;top:639px;width:1px;height:43px;background:#e6e6e6"></div>
<div class="tb" style="left:769px;top:774px;width:1px;height:44px;background:#e6e6e6"></div>
<div class="tb" style="left:834px;top:639px;width:1px;height:43px;background:#e6e6e6"></div>
<div class="tb" style="left:834px;top:774px;width:1px;height:44px;background:#e6e6e6"></div>
<div class="tb" style="left:959px;top:639px;width:1px;height:43px;background:#e6e6e6"></div>
<div class="tb" style="left:959px;top:774px;width:1px;height:44px;background:#e6e6e6"></div>
<div class="tb" style="left:770px;top:638px;width:64px;height:4px;background:#9e9e9e"></div>
<div class="tx" id="a00" style="left:328px;top:650px;color:#777;letter-spacing:0.129px;transform:translateX(0.45px);">Campaign</div>
<div class="tx" style="left:769px;top:650px;width:55px;text-align:right;color:#777"><span id="a01" style="">Clicks</span></div>
<div class="tx" style="left:834px;top:650px;width:115px;text-align:right;color:#777"><span id="a02" style="transform:translateX(1.80px);">UC (campaign)</span></div>
<div class="tx" style="left:959px;top:650px;width:104px;text-align:right;color:#777"><span id="a03" style="letter-spacing:-0.225px;transform:translateX(0.45px);">Conv.</span></div>
<div class="tx" id="a10" style="left:328px;top:696px;color:#222;letter-spacing:0.033px;transform:translateX(-0.45px);">Meta Ads Food Delivery Promo</div>
<div class="tx clip" style="left:779px;top:696px;width:46px;color:#222">32,258</div>
<div class="tx" style="left:834px;top:696px;width:115px;text-align:right;color:#222"><span id="a12" style="transform:translateX(0.90px);">26,647</span></div>
<div class="tx" style="left:959px;top:696px;width:104px;text-align:right;color:#222"><span id="a13" style="letter-spacing:-0.675px;transform:translateX(-0.45px);">4,744</span></div>
<div class="tx" id="a20" style="left:328px;top:741px;color:#222;letter-spacing:0.033px;transform:translateX(0.45px);">Google Ads Fitness App Split</div>
<div class="tx clip" style="left:779px;top:741px;width:46px;color:#222">32,042</div>
<div class="tx" style="left:834px;top:741px;width:115px;text-align:right;color:#222"><span id="a22" style="transform:translateX(0.90px);">26,465</span></div>
<div class="tx" style="left:959px;top:741px;width:104px;text-align:right;color:#222"><span id="a23" style="letter-spacing:-0.675px;transform:translateX(-2.25px);">4,901</span></div>
<div class="tx clip" style="left:779px;top:786px;width:46px;color:#777">64,300</div>
<div class="tx" style="left:834px;top:786px;width:115px;text-align:right;color:#777"><span id="a32" style="transform:translateX(0.90px);">53,112</span></div>
<div class="tx" style="left:959px;top:786px;width:104px;text-align:right;color:#777"><span id="a33" style="letter-spacing:-0.225px;transform:translateX(-0.45px);">9,645</span></div>
<div class="tbl" style="left:1124px;width:755px"></div>
<div class="tb" style="left:1125px;top:639px;width:753px;height:43px;background:#fafafa"></div>
<div class="tb" style="left:1125px;top:684px;width:753px;height:44px;background:#fff"></div>
<div class="tb" style="left:1125px;top:729px;width:753px;height:43px;background:#fff"></div>
<div class="tb" style="left:1125px;top:774px;width:753px;height:44px;background:#f9f9f9"></div>
<div class="tb" style="left:1124px;top:682px;width:755px;height:2px;background:#e2e2e2"></div>
<div class="tb" style="left:1124px;top:728px;width:755px;height:1px;background:#e6e6e6"></div>
<div class="tb" style="left:1124px;top:772px;width:755px;height:2px;background:#e2e2e2"></div>
<div class="tb" style="left:1575px;top:639px;width:1px;height:43px;background:#e6e6e6"></div>
<div class="tb" style="left:1575px;top:774px;width:1px;height:44px;background:#e6e6e6"></div>
<div class="tb" style="left:1640px;top:639px;width:1px;height:43px;background:#e6e6e6"></div>
<div class="tb" style="left:1640px;top:774px;width:1px;height:44px;background:#e6e6e6"></div>
<div class="tb" style="left:1765px;top:639px;width:1px;height:43px;background:#e6e6e6"></div>
<div class="tb" style="left:1765px;top:774px;width:1px;height:44px;background:#e6e6e6"></div>
<div class="tb" style="left:1576px;top:638px;width:64px;height:4px;background:#9e9e9e"></div>
<div class="tx" id="b00" style="left:1134px;top:650px;color:#777;transform:translateX(-0.90px);">Landing page</div>
<div class="tx" style="left:1575px;top:650px;width:55px;text-align:right;color:#777"><span id="b01" style="">Clicks</span></div>
<div class="tx" style="left:1640px;top:650px;width:115px;text-align:right;color:#777"><span id="b02" style="transform:translateX(1.80px);">UC (campaign)</span></div>
<div class="tx" style="left:1765px;top:650px;width:103px;text-align:right;color:#777"><span id="b03" style="letter-spacing:-0.225px;transform:translateX(1.35px);">Conv.</span></div>
<div class="tx" id="b10" style="left:1134px;top:696px;color:#222;transform:translateX(-0.90px);">Little Caesars</div>
<div class="tx clip" style="left:1585px;top:696px;width:46px;color:#222">16,130</div>
<div class="tx" style="left:1640px;top:696px;width:115px;text-align:right;color:#222"><span id="b12" style="letter-spacing:-0.180px;transform:translateX(-0.45px);">13,366</span></div>
<div class="tx" style="left:1765px;top:696px;width:103px;text-align:right;color:#222"><span id="b13" style="letter-spacing:-0.225px;transform:translateX(0.45px);">2,327</span></div>
<div class="tx" id="b20" style="left:1134px;top:741px;color:#222;transform:translateX(-0.90px);">Papa Johns</div>
<div class="tx clip" style="left:1585px;top:741px;width:46px;color:#222">16,128</div>
<div class="tx" style="left:1640px;top:741px;width:115px;text-align:right;color:#222"><span id="b22" style="">13,281</span></div>
<div class="tx" style="left:1765px;top:741px;width:103px;text-align:right;color:#222"><span id="b23" style="">2,417</span></div>
<div class="tx clip" style="left:1585px;top:786px;width:46px;color:#777">32,258</div>
<div class="tx" style="left:1640px;top:786px;width:115px;text-align:right;color:#777"><span id="b32" style="">26,647</span></div>
<div class="tx" style="left:1765px;top:786px;width:103px;text-align:right;color:#777"><span id="b33" style="">4,744</span></div>
<svg style="position:absolute;left:744px;top:691px" width="18" height="27" viewBox="0 0 18 27"><path d="M1.3 0.8V21.8L5.6 17.8L9.2 24.8L12 23.6L8.6 16.8H15.9Z" fill="#fff" stroke="#111" stroke-width="1" stroke-linejoin="miter"/></svg>
<div style="position:absolute;left:756px;top:710px;width:229px;height:32px;background:#1c1c1c;border:2px solid #c8c8c8"></div>
<div id="tip" style="position:absolute;left:766px;top:716px;font-size:14.5px;line-height:20px;color:#e6e6e6;white-space:nowrap;letter-spacing:0.167px;transform:translateX(0.45px);">Meta Ads Food Delivery Promo</div>

<div style="position:absolute;left:1899px;top:54px;width:18px;height:810px;background:#fafafa"></div>
<div style="position:absolute;left:1903px;top:54px;width:11px;height:398px;background:#8a8a8a;border-radius:0 0 6px 6px"></div>
<svg style="position:absolute;left:1900px;top:851px" width="18" height="14"><path d="M3 2.8h12l-6 8.2z" fill="#8a8a8a" stroke="#8a8a8a" stroke-width="1.5" stroke-linejoin="round"/></svg>
</body></html>
